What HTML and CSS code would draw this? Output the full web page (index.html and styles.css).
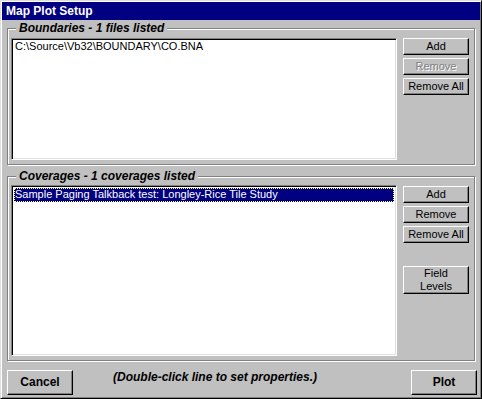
FILE: index.html
```html
<!DOCTYPE html>
<html>
<head>
<meta charset="utf-8">
<title>Map Plot Setup</title>
<link rel="stylesheet" href="styles.css">
</head>
<body>
<div class="win">
  <div class="title">Map Plot Setup</div>
  <div class="body">
    <div class="group g1">
      <span class="legend">Boundaries - 1 files listed</span>
      <div class="list l1">
        <div class="item">C:\Source\Vb32\BOUNDARY\CO.BNA</div>
      </div>
      <div class="btns">
        <button class="btn">Add</button>
        <button class="btn disabled">Remove</button>
        <button class="btn">Remove All</button>
      </div>
    </div>
    <div class="group g2">
      <span class="legend">Coverages - 1 coverages listed</span>
      <div class="list l2">
        <div class="item selected">Sample Paging Talkback test: Longley-Rice Tile Study</div>
      </div>
      <div class="btns b2">
        <button class="btn">Add</button>
        <button class="btn">Remove</button>
        <button class="btn">Remove All</button>
        <button class="btn tall">Field<br>Levels</button>
      </div>
    </div>
    <div class="footer">
      <button class="btn big">Cancel</button>
      <span class="hint">(Double-click line to set properties.)</span>
      <button class="btn big">Plot</button>
    </div>
  </div>
</div>
</body>
</html>
```
FILE: styles.css
```css
* { box-sizing: border-box; }
html, body { margin: 0; padding: 0; background: #c0c0c0; }
body {
  font-family: "Liberation Sans", Arial, sans-serif;
  font-size: 11px;
  color: #000;
}
.win {
  width: 482px;
  height: 399px;
  background: #c0c0c0;
  border: 1px solid;
  border-color: #dfdfdf #000 #000 #dfdfdf;
  box-shadow: inset 1px 1px #fff, inset -1px -1px #808080;
  padding: 1px;
}
.title {
  height: 18px;
  background: #000080;
  color: #fff;
  font-weight: bold;
  font-size: 12px;
  line-height: 18px;
  padding-left: 4px;
}
.body {
  padding: 0 0 0 5px;
}
.group {
  position: relative;
  width: 468px;
  border: 1px solid #808080;
  box-shadow: inset 1px 1px #fff, 1px 1px #fff;
  display: flex;
  align-items: flex-start;
  padding: 9px 5px 4px 3px;
  gap: 6px;
}
.g1 { margin-top: 8px; height: 137px; }
.g2 { margin-top: 11px; height: 185px; padding-top: 8px; }
.legend {
  position: absolute;
  left: 8px;
  top: -8px;
  padding: 0 3px;
  background: #c0c0c0;
  font-weight: bold;
  font-style: italic;
  font-size: 12px;
  line-height: 14px;
  white-space: nowrap;
}
.list {
  width: 386px;
  background: #fff;
  border: 1px solid;
  border-color: #808080 #fff #fff #808080;
  box-shadow: inset 1px 1px #000, inset -1px -1px #dfdfdf;
  padding: 2px 2px;
}
.l1 { height: 122px; padding-top: 1px; }
.l2 { height: 171px; }
.item {
  line-height: 13px;
  height: 14px;
  padding-left: 1px;
  white-space: nowrap;
}
.selected {
  background: #000080;
  color: #fff;
  outline: 1px dotted #ffff80;
  outline-offset: -1px;
}
.btns {
  display: flex;
  flex-direction: column;
  gap: 3px;
  width: 66px;
}
.b2 { margin-top: 1px; }
.btn {
  font-family: "Liberation Sans", Arial, sans-serif;
  font-size: 11px;
  color: #000;
  background: #c0c0c0;
  width: 66px;
  height: 17px;
  padding: 0;
  margin: 0;
  border: 1px solid;
  border-color: #fff #000 #000 #fff;
  box-shadow: inset -1px -1px #808080;
  line-height: 13px;
  text-align: center;
}
.disabled {
  color: #808080;
  text-shadow: 1px 1px 0 #fff;
}
.tall {
  height: 28px;
  margin-top: 20px;
}
.footer {
  width: 470px;
  margin-top: 9px;
  display: flex;
  align-items: flex-start;
}
.big {
  height: 25px;
  font-weight: bold;
  font-size: 12px;
}
.hint {
  flex: 1;
  margin-left: 40px;
  font-weight: bold;
  font-style: italic;
  font-size: 12px;
  line-height: 14px;
  white-space: nowrap;
}
```
